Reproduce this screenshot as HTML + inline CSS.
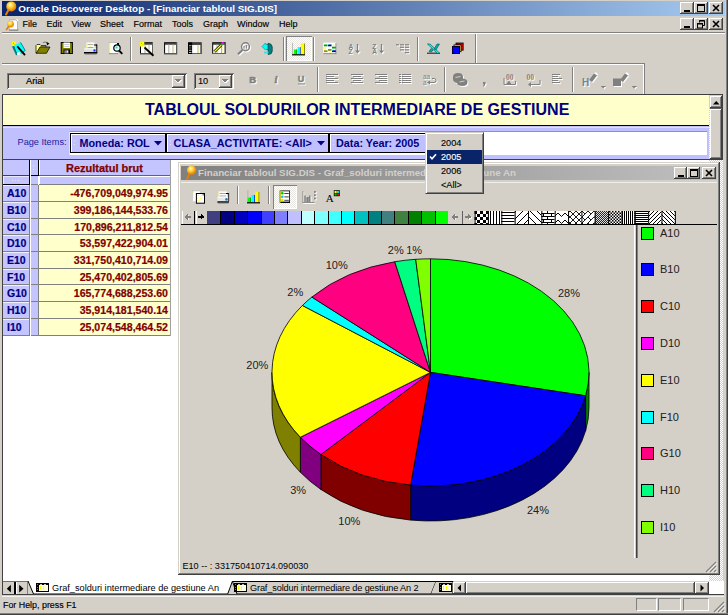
<!DOCTYPE html><html><head><meta charset="utf-8"><style>
html,body{margin:0;padding:0;width:728px;height:615px;overflow:hidden;background:#D4D0C8;}
body{position:relative;font-family:"Liberation Sans",sans-serif;}
div{box-sizing:border-box;}
svg{position:absolute;overflow:visible}
</style></head><body>
<div style="position:absolute;left:0px;top:0px;width:728px;height:615px;background:#D4D0C8"></div>
<div style="position:absolute;left:0px;top:0px;width:1px;height:615px;background:#D4D0C8"></div>
<div style="position:absolute;left:726px;top:0px;width:1px;height:615px;background:#808080"></div>
<div style="position:absolute;left:727px;top:0px;width:1px;height:615px;background:#404040"></div>
<div style="position:absolute;left:0px;top:613px;width:728px;height:1px;background:#808080"></div>
<div style="position:absolute;left:0px;top:614px;width:728px;height:1px;background:#404040"></div>
<div style="position:absolute;left:1.6px;top:1px;width:723.4px;height:14.8px;background:linear-gradient(to right,#0A246A,#A6CAF0)"></div>
<div style="position:absolute;left:18.3px;top:2px;white-space:pre;color:#fff;font-weight:bold;font-size:9.85px;line-height:14px;font-family:"Liberation Sans",sans-serif;">Oracle Discoverer Desktop - [Financiar tabloul SIG.DIS]</div>
<div style="position:absolute;left:680px;top:2px;width:14px;height:12px;background:#D4D0C8;box-shadow:inset -1px -1px #404040, inset 1px 1px #FFFFFF, inset -2px -2px #808080, inset 2px 2px #D4D0C8;"></div>
<div style="position:absolute;left:684px;top:10px;width:6px;height:2px;background:#000"></div>
<div style="position:absolute;left:694px;top:2px;width:14px;height:12px;background:#D4D0C8;box-shadow:inset -1px -1px #404040, inset 1px 1px #FFFFFF, inset -2px -2px #808080, inset 2px 2px #D4D0C8;"></div>
<div style="position:absolute;left:697px;top:4px;width:8px;height:8px;border:1px solid #000;border-top-width:2px"></div>
<div style="position:absolute;left:709px;top:2px;width:14px;height:12px;background:#D4D0C8;box-shadow:inset -1px -1px #404040, inset 1px 1px #FFFFFF, inset -2px -2px #808080, inset 2px 2px #D4D0C8;"></div>
<svg style="left:709px;top:2px" width="14" height="12"><path d="M4 3 L10 9 M10 3 L4 9" stroke="#000" stroke-width="1.6"/></svg>
<div style="position:absolute;left:22.5px;top:18px;white-space:pre;color:#000;font-size:9px;line-height:12px;-webkit-text-stroke:0.15px #000;font-family:"Liberation Sans",sans-serif;">File</div>
<div style="position:absolute;left:46.5px;top:18px;white-space:pre;color:#000;font-size:9px;line-height:12px;-webkit-text-stroke:0.15px #000;font-family:"Liberation Sans",sans-serif;">Edit</div>
<div style="position:absolute;left:71.5px;top:18px;white-space:pre;color:#000;font-size:9px;line-height:12px;-webkit-text-stroke:0.15px #000;font-family:"Liberation Sans",sans-serif;">View</div>
<div style="position:absolute;left:100px;top:18px;white-space:pre;color:#000;font-size:9px;line-height:12px;-webkit-text-stroke:0.15px #000;font-family:"Liberation Sans",sans-serif;">Sheet</div>
<div style="position:absolute;left:133.5px;top:18px;white-space:pre;color:#000;font-size:9px;line-height:12px;-webkit-text-stroke:0.15px #000;font-family:"Liberation Sans",sans-serif;">Format</div>
<div style="position:absolute;left:172px;top:18px;white-space:pre;color:#000;font-size:9px;line-height:12px;-webkit-text-stroke:0.15px #000;font-family:"Liberation Sans",sans-serif;">Tools</div>
<div style="position:absolute;left:203px;top:18px;white-space:pre;color:#000;font-size:9px;line-height:12px;-webkit-text-stroke:0.15px #000;font-family:"Liberation Sans",sans-serif;">Graph</div>
<div style="position:absolute;left:237px;top:18px;white-space:pre;color:#000;font-size:9px;line-height:12px;-webkit-text-stroke:0.15px #000;font-family:"Liberation Sans",sans-serif;">Window</div>
<div style="position:absolute;left:279px;top:18px;white-space:pre;color:#000;font-size:9px;line-height:12px;-webkit-text-stroke:0.15px #000;font-family:"Liberation Sans",sans-serif;">Help</div>
<div style="position:absolute;left:680px;top:18px;width:14px;height:12px;background:#D4D0C8;box-shadow:inset -1px -1px #404040, inset 1px 1px #FFFFFF, inset -2px -2px #808080, inset 2px 2px #D4D0C8;"></div>
<div style="position:absolute;left:684px;top:26px;width:6px;height:2px;background:#000"></div>
<div style="position:absolute;left:694px;top:18px;width:14px;height:12px;background:#D4D0C8;box-shadow:inset -1px -1px #404040, inset 1px 1px #FFFFFF, inset -2px -2px #808080, inset 2px 2px #D4D0C8;"></div>
<svg style="left:694px;top:18px" width="14" height="12"><path d="M5.5 2.5h5v5h-2 M5.5 2.5v2" stroke="#000" fill="none" stroke-width="1"/><path d="M5.5 3h5" stroke="#000" stroke-width="1"/><rect x="3.5" y="5.5" width="5" height="4.5" stroke="#000" fill="none" stroke-width="1"/><path d="M3.5 6h5" stroke="#000"/></svg>
<div style="position:absolute;left:709px;top:18px;width:14px;height:12px;background:#D4D0C8;box-shadow:inset -1px -1px #404040, inset 1px 1px #FFFFFF, inset -2px -2px #808080, inset 2px 2px #D4D0C8;"></div>
<svg style="left:709px;top:18px" width="14" height="12"><path d="M4 3 L10 9 M10 3 L4 9" stroke="#000" stroke-width="1.6"/></svg>
<div style="position:absolute;left:2px;top:32px;width:723px;height:1px;background:#808080"></div>
<div style="position:absolute;left:2px;top:33px;width:723px;height:1px;background:#fff"></div>
<div style="position:absolute;left:2px;top:63px;width:643px;height:1px;background:#808080"></div>
<div style="position:absolute;left:2px;top:64px;width:643px;height:1px;background:#fff"></div>
<div style="position:absolute;left:475px;top:34px;width:1px;height:29px;background:#808080"></div>
<div style="position:absolute;left:476px;top:34px;width:1px;height:29px;background:#fff"></div>
<div style="position:absolute;left:2px;top:93px;width:0px;height:1px;background:#808080"></div>
<div style="position:absolute;left:2px;top:94px;width:0px;height:1px;background:#fff"></div>
<div style="position:absolute;left:7px;top:73px;width:180px;height:16px;background:#D4D0C8;box-shadow:inset 1px 1px #808080, inset -1px -1px #FFFFFF, inset 2px 2px #404040, inset -2px -2px #D4D0C8;"></div>
<div style="position:absolute;left:26px;top:75px;white-space:pre;font-size:9.2px;line-height:12px;color:#000;-webkit-text-stroke:0.2px #000;font-family:"Liberation Sans",sans-serif;">Arial</div>
<div style="position:absolute;left:172px;top:75px;width:13px;height:13px;background:#D4D0C8;box-shadow:inset -1px -1px #404040, inset 1px 1px #FFFFFF, inset -2px -2px #808080, inset 2px 2px #D4D0C8;"></div>
<svg style="left:172px;top:75px" width="13.00" height="13.00" viewBox="0 0 16 16" shape-rendering="crispEdges"><g transform="translate(1,1)" fill="#fff" stroke="#fff"><path d="M3.5 5.5 L10.5 5.5 L7 9 Z" fill="#fff"/></g><path d="M3.5 5.5 L10.5 5.5 L7 9 Z" fill="#808080"/></svg>
<div style="position:absolute;left:194px;top:73px;width:40px;height:16px;background:#D4D0C8;box-shadow:inset 1px 1px #808080, inset -1px -1px #FFFFFF, inset 2px 2px #404040, inset -2px -2px #D4D0C8;"></div>
<div style="position:absolute;left:198px;top:75px;white-space:pre;font-size:9.2px;line-height:12px;color:#000;-webkit-text-stroke:0.1px #000;font-family:"Liberation Sans",sans-serif;">10</div>
<div style="position:absolute;left:219px;top:75px;width:13px;height:13px;background:#D4D0C8;box-shadow:inset -1px -1px #404040, inset 1px 1px #FFFFFF, inset -2px -2px #808080, inset 2px 2px #D4D0C8;"></div>
<svg style="left:219px;top:75px" width="13.00" height="13.00" viewBox="0 0 16 16" shape-rendering="crispEdges"><g transform="translate(1,1)" fill="#fff" stroke="#fff"><path d="M3.5 5.5 L10.5 5.5 L7 9 Z" fill="#fff"/></g><path d="M3.5 5.5 L10.5 5.5 L7 9 Z" fill="#808080"/></svg>
<div style="position:absolute;left:643px;top:64px;width:1px;height:30px;background:#fff"></div>
<div style="position:absolute;left:644px;top:64px;width:1px;height:30px;background:#808080"></div>
<svg style="left:0;top:0" width="30" height="20"><defs><radialGradient id="mg" cx="0.4" cy="0.35" r="0.6"><stop offset="0" stop-color="#FFFFB0"/><stop offset="0.45" stop-color="#FFD040"/><stop offset="1" stop-color="#E88000"/></radialGradient></defs><circle cx="11.3" cy="6.4" r="5" fill="url(#mg)"/><path d="M8.5 10 L6 14.5" stroke="#E88000" stroke-width="2" stroke-linecap="round"/></svg>
<svg style="left:4px;top:16.5px" width="15.00" height="15.00" viewBox="0 0 16 16"><rect x="5" y="2.5" width="10" height="11" fill="#fff"/><path d="M5.5 3h7l2 2v9h-9z" fill="none" stroke="#909090" stroke-width="0.8"/><rect x="5.5" y="13.5" width="10" height="1" fill="#808080"/><circle cx="7" cy="7.5" r="3.6" fill="url(#mg)"/><path d="M5 10 L2.3 14" fill="none" stroke="#E08000" stroke-width="1.8"/></svg>
<div style="position:absolute;left:130px;top:37px;width:1px;height:24px;background:#808080"></div>
<div style="position:absolute;left:131px;top:37px;width:1px;height:24px;background:#fff"></div>
<div style="position:absolute;left:283px;top:37px;width:1px;height:24px;background:#808080"></div>
<div style="position:absolute;left:284px;top:37px;width:1px;height:24px;background:#fff"></div>
<div style="position:absolute;left:313px;top:37px;width:1px;height:24px;background:#808080"></div>
<div style="position:absolute;left:314px;top:37px;width:1px;height:24px;background:#fff"></div>
<div style="position:absolute;left:417px;top:37px;width:1px;height:24px;background:#808080"></div>
<div style="position:absolute;left:418px;top:37px;width:1px;height:24px;background:#fff"></div>
<div style="position:absolute;left:286px;top:36px;width:26px;height:25px;box-shadow:inset 1px 1px #808080, inset -1px -1px #fff;background-color:#E8E6E2;background-image:linear-gradient(45deg,#fff 25%,transparent 25%,transparent 75%,#fff 75%),linear-gradient(45deg,#fff 25%,transparent 25%,transparent 75%,#fff 75%);background-size:2px 2px;background-position:0 0,1px 1px;"></div>
<div style="position:absolute;left:317px;top:67px;width:1px;height:25px;background:#808080"></div>
<div style="position:absolute;left:318px;top:67px;width:1px;height:25px;background:#fff"></div>
<div style="position:absolute;left:444px;top:67px;width:1px;height:25px;background:#808080"></div>
<div style="position:absolute;left:445px;top:67px;width:1px;height:25px;background:#fff"></div>
<div style="position:absolute;left:572px;top:67px;width:1px;height:25px;background:#808080"></div>
<div style="position:absolute;left:573px;top:67px;width:1px;height:25px;background:#fff"></div>
<svg style="left:601px;top:86px" width="6" height="4"><path d="M0 0h5l-2.5 3z" fill="#808080"/><path d="M1 4h5" stroke="#fff" stroke-width="0"/></svg>
<svg style="left:632px;top:86px" width="6" height="4"><path d="M0 0h5l-2.5 3z" fill="#808080"/><path d="M1 4h5" stroke="#fff" stroke-width="0"/></svg>
<div style="position:absolute;left:2px;top:94px;width:721px;height:487px;background:#fff;border-top:1px solid #404040;border-left:1px solid #404040"></div>
<div style="position:absolute;left:3px;top:95px;width:706px;height:31px;background:#FFFFCC;border-bottom:1px solid #000"></div>
<div style="position:absolute;left:145px;top:102px;white-space:pre;font-weight:bold;font-size:16px;line-height:16px;color:#000080;font-family:"Liberation Sans",sans-serif;">TABLOUL SOLDURILOR INTERMEDIARE DE GESTIUNE</div>
<div style="position:absolute;left:709px;top:108px;width:13.5px;height:473px;background-color:#D4D0C8;background-image:linear-gradient(45deg,#fff 25%,transparent 25%,transparent 75%,#fff 75%),linear-gradient(45deg,#fff 25%,transparent 25%,transparent 75%,#fff 75%);background-size:2px 2px;background-position:0 0,1px 1px;"></div>
<div style="position:absolute;left:709px;top:95px;width:14px;height:13px;background:#D4D0C8"></div>
<div style="position:absolute;left:709.5px;top:96px;width:12.5px;height:11.5px;background:#D4D0C8;box-shadow:inset -1px -1px #404040, inset 1px 1px #FFFFFF, inset -2px -2px #808080, inset 2px 2px #D4D0C8;"></div>
<div style="position:absolute;left:709.5px;top:107.5px;width:12.5px;height:1px;background:#606060"></div>
<svg style="left:709.5px;top:96px" width="12" height="12"><path d="M3 8.5h6.5l-3.25-3.5z" fill="#000"/></svg>
<div style="position:absolute;left:709.5px;top:108.5px;width:12.5px;height:50px;background:#D4D0C8;box-shadow:inset -1px -1px #404040, inset 1px 1px #FFFFFF, inset -2px -2px #808080, inset 2px 2px #D4D0C8;"></div>
<div style="position:absolute;left:722px;top:95px;width:1px;height:64px;background:#404040"></div>
<div style="position:absolute;left:722.5px;top:95px;width:3px;height:486px;background:#D4D0C8"></div>
<div style="position:absolute;left:3px;top:126px;width:706px;height:33px;background:#C0C0FF"></div>
<div style="position:absolute;left:3px;top:127px;width:706px;height:1px;background:#E0E0FF"></div>
<div style="position:absolute;left:17.5px;top:137px;white-space:pre;font-size:9.2px;line-height:11px;color:#2020A0;font-family:"Liberation Sans",sans-serif;">Page Items:</div>
<div style="position:absolute;left:68.5px;top:131.2px;width:638px;height:23.4px;background:#fff;border-top:1px solid #9090C0;border-left:1px solid #E0E0E0"></div>
<div style="position:absolute;left:70px;top:133px;width:96px;height:20px;background:#C0C0FF;border:1px solid #000;box-shadow:inset 1px 1px #fff"></div>
<svg style="left:74px;top:139px" width="3" height="9"><rect x="0" y="1.5" width="1" height="1" fill="#E8E8F0"/><rect x="0" y="5" width="1" height="1" fill="#E8E8F0"/></svg>
<div style="position:absolute;left:79.5px;top:136.5px;white-space:pre;font-weight:bold;font-size:10.8px;line-height:12px;color:#000080;font-family:"Liberation Sans",sans-serif;">Moneda: ROL</div>
<svg style="left:154px;top:141px" width="8" height="5"><path d="M0 0h8l-4 4.5z" fill="#000080"/></svg>
<div style="position:absolute;left:166px;top:133px;width:163px;height:20px;background:#C0C0FF;border:1px solid #000;box-shadow:inset 1px 1px #fff"></div>
<svg style="left:170px;top:139px" width="3" height="9"><rect x="0" y="1.5" width="1" height="1" fill="#E8E8F0"/><rect x="0" y="5" width="1" height="1" fill="#E8E8F0"/></svg>
<div style="position:absolute;left:173.6px;top:136.5px;white-space:pre;font-weight:bold;font-size:10.8px;line-height:12px;color:#000080;font-family:"Liberation Sans",sans-serif;">CLASA_ACTIVITATE: &lt;All&gt;</div>
<svg style="left:317px;top:141px" width="8" height="5"><path d="M0 0h8l-4 4.5z" fill="#000080"/></svg>
<div style="position:absolute;left:329px;top:133px;width:100px;height:20px;background:#C0C0FF;border:1px solid #000;box-shadow:inset 1px 1px #fff"></div>
<svg style="left:333px;top:139px" width="3" height="9"><rect x="0" y="1.5" width="1" height="1" fill="#E8E8F0"/><rect x="0" y="5" width="1" height="1" fill="#E8E8F0"/></svg>
<div style="position:absolute;left:336px;top:136.5px;white-space:pre;font-weight:bold;font-size:10.8px;line-height:12px;color:#000080;font-family:"Liberation Sans",sans-serif;">Data: Year: 2005</div>
<div style="position:absolute;left:3px;top:159px;width:720px;height:1px;background:#404040"></div>
<div style="position:absolute;left:3px;top:160px;width:26px;height:16px;background:#C4C4FF;border-bottom:1px solid #404060"></div>
<div style="position:absolute;left:29px;top:160px;width:1px;height:25px;background:#000"></div>
<div style="position:absolute;left:30px;top:160px;width:1px;height:125px;background:#fff"></div>
<div style="position:absolute;left:31px;top:160px;width:7px;height:16px;background:#C4C4FF;border-bottom:1px solid #000"></div>
<div style="position:absolute;left:38px;top:160px;width:1px;height:16px;background:#000"></div>
<svg style="left:33px;top:165px" width="3" height="8"><rect x="0" y="0.5" width="1" height="1" fill="#E8E8F8"/><rect x="0" y="4" width="1" height="1" fill="#E8E8F8"/></svg>
<div style="position:absolute;left:39px;top:160px;width:131px;height:16px;background:#C4C4FF;box-shadow:inset 1px 0 #fff;border-bottom:1px solid #606080"></div>
<div style="position:absolute;left:39px;top:161.5px;white-space:pre;width:131px;text-align:center;font-weight:bold;font-size:11px;line-height:13px;color:#800000;-webkit-text-stroke:0.25px #800000;font-family:"Liberation Sans",sans-serif;">Rezultatul brut</div>
<div style="position:absolute;left:3px;top:176px;width:26px;height:9px;background:#C4C4FF;box-shadow:inset 1px 1px #E8E8FF;border-bottom:1px solid #000"></div>
<svg style="left:12px;top:179px" width="10" height="3"><rect x="0" y="1" width="1" height="1" fill="#E8E8F8"/><rect x="3" y="1" width="1" height="1" fill="#E8E8F8"/><rect x="6" y="1" width="1" height="1" fill="#E8E8F8"/></svg>
<div style="position:absolute;left:31px;top:176px;width:7px;height:9px;background:#C4C4FF;border-bottom:1px solid #808080"></div>
<div style="position:absolute;left:38px;top:176px;width:1px;height:9px;background:#fff"></div>
<div style="position:absolute;left:39px;top:176px;width:131px;height:9px;background:#C4C4FF;box-shadow:inset 1px 1px #fff;border-bottom:1px solid #808080"></div>
<div style="position:absolute;left:3px;top:185px;width:26px;height:17px;background:#C4C4FF;box-shadow:inset 0 1px #F0F0FF;border-bottom:1px solid #808080"></div>
<div style="position:absolute;left:29px;top:185px;width:1px;height:17px;background:#808080"></div>
<div style="position:absolute;left:31px;top:185px;width:7px;height:17px;background:#C4C4FF;border-bottom:1px solid #808080"></div>
<div style="position:absolute;left:38px;top:185px;width:1px;height:17px;background:#808080"></div>
<div style="position:absolute;left:39px;top:185px;width:131px;height:17px;background:#FFFFCC;border-bottom:1px solid #808080"></div>
<div style="position:absolute;left:7px;top:187px;white-space:pre;font-weight:bold;font-size:10.5px;line-height:13px;color:#000080;-webkit-text-stroke:0.2px #000080;font-family:"Liberation Sans",sans-serif;">A10</div>
<div style="position:absolute;left:39px;top:187px;white-space:pre;width:129px;text-align:right;font-weight:bold;font-size:10.6px;line-height:13px;color:#800000;-webkit-text-stroke:0.2px #800000;font-family:"Liberation Sans",sans-serif;">-476,709,049,974.95</div>
<div style="position:absolute;left:3px;top:202px;width:26px;height:17px;background:#C4C4FF;box-shadow:inset 0 1px #F0F0FF;border-bottom:1px solid #808080"></div>
<div style="position:absolute;left:29px;top:202px;width:1px;height:17px;background:#808080"></div>
<div style="position:absolute;left:31px;top:202px;width:7px;height:17px;background:#C4C4FF;border-bottom:1px solid #808080"></div>
<div style="position:absolute;left:38px;top:202px;width:1px;height:17px;background:#808080"></div>
<div style="position:absolute;left:39px;top:202px;width:131px;height:17px;background:#FFFFCC;border-bottom:1px solid #808080"></div>
<div style="position:absolute;left:7px;top:204px;white-space:pre;font-weight:bold;font-size:10.5px;line-height:13px;color:#000080;-webkit-text-stroke:0.2px #000080;font-family:"Liberation Sans",sans-serif;">B10</div>
<div style="position:absolute;left:39px;top:204px;white-space:pre;width:129px;text-align:right;font-weight:bold;font-size:10.6px;line-height:13px;color:#800000;-webkit-text-stroke:0.2px #800000;font-family:"Liberation Sans",sans-serif;">399,186,144,533.76</div>
<div style="position:absolute;left:3px;top:219px;width:26px;height:16px;background:#C4C4FF;box-shadow:inset 0 1px #F0F0FF;border-bottom:1px solid #808080"></div>
<div style="position:absolute;left:29px;top:219px;width:1px;height:16px;background:#808080"></div>
<div style="position:absolute;left:31px;top:219px;width:7px;height:16px;background:#C4C4FF;border-bottom:1px solid #808080"></div>
<div style="position:absolute;left:38px;top:219px;width:1px;height:16px;background:#808080"></div>
<div style="position:absolute;left:39px;top:219px;width:131px;height:16px;background:#FFFFCC;border-bottom:1px solid #808080"></div>
<div style="position:absolute;left:7px;top:221px;white-space:pre;font-weight:bold;font-size:10.5px;line-height:13px;color:#000080;-webkit-text-stroke:0.2px #000080;font-family:"Liberation Sans",sans-serif;">C10</div>
<div style="position:absolute;left:39px;top:221px;white-space:pre;width:129px;text-align:right;font-weight:bold;font-size:10.6px;line-height:13px;color:#800000;-webkit-text-stroke:0.2px #800000;font-family:"Liberation Sans",sans-serif;">170,896,211,812.54</div>
<div style="position:absolute;left:3px;top:235px;width:26px;height:17px;background:#C4C4FF;box-shadow:inset 0 1px #F0F0FF;border-bottom:1px solid #808080"></div>
<div style="position:absolute;left:29px;top:235px;width:1px;height:17px;background:#808080"></div>
<div style="position:absolute;left:31px;top:235px;width:7px;height:17px;background:#C4C4FF;border-bottom:1px solid #808080"></div>
<div style="position:absolute;left:38px;top:235px;width:1px;height:17px;background:#808080"></div>
<div style="position:absolute;left:39px;top:235px;width:131px;height:17px;background:#FFFFCC;border-bottom:1px solid #808080"></div>
<div style="position:absolute;left:7px;top:237px;white-space:pre;font-weight:bold;font-size:10.5px;line-height:13px;color:#000080;-webkit-text-stroke:0.2px #000080;font-family:"Liberation Sans",sans-serif;">D10</div>
<div style="position:absolute;left:39px;top:237px;white-space:pre;width:129px;text-align:right;font-weight:bold;font-size:10.6px;line-height:13px;color:#800000;-webkit-text-stroke:0.2px #800000;font-family:"Liberation Sans",sans-serif;">53,597,422,904.01</div>
<div style="position:absolute;left:3px;top:252px;width:26px;height:17px;background:#C4C4FF;box-shadow:inset 0 1px #F0F0FF;border-bottom:1px solid #808080"></div>
<div style="position:absolute;left:29px;top:252px;width:1px;height:17px;background:#808080"></div>
<div style="position:absolute;left:31px;top:252px;width:7px;height:17px;background:#C4C4FF;border-bottom:1px solid #808080"></div>
<div style="position:absolute;left:38px;top:252px;width:1px;height:17px;background:#808080"></div>
<div style="position:absolute;left:39px;top:252px;width:131px;height:17px;background:#FFFFCC;border-bottom:1px solid #808080"></div>
<div style="position:absolute;left:7px;top:254px;white-space:pre;font-weight:bold;font-size:10.5px;line-height:13px;color:#000080;-webkit-text-stroke:0.2px #000080;font-family:"Liberation Sans",sans-serif;">E10</div>
<div style="position:absolute;left:39px;top:254px;white-space:pre;width:129px;text-align:right;font-weight:bold;font-size:10.6px;line-height:13px;color:#800000;-webkit-text-stroke:0.2px #800000;font-family:"Liberation Sans",sans-serif;">331,750,410,714.09</div>
<div style="position:absolute;left:3px;top:269px;width:26px;height:16px;background:#C4C4FF;box-shadow:inset 0 1px #F0F0FF;border-bottom:1px solid #808080"></div>
<div style="position:absolute;left:29px;top:269px;width:1px;height:16px;background:#808080"></div>
<div style="position:absolute;left:31px;top:269px;width:7px;height:16px;background:#C4C4FF;border-bottom:1px solid #808080"></div>
<div style="position:absolute;left:38px;top:269px;width:1px;height:16px;background:#808080"></div>
<div style="position:absolute;left:39px;top:269px;width:131px;height:16px;background:#FFFFCC;border-bottom:1px solid #808080"></div>
<div style="position:absolute;left:7px;top:271px;white-space:pre;font-weight:bold;font-size:10.5px;line-height:13px;color:#000080;-webkit-text-stroke:0.2px #000080;font-family:"Liberation Sans",sans-serif;">F10</div>
<div style="position:absolute;left:39px;top:271px;white-space:pre;width:129px;text-align:right;font-weight:bold;font-size:10.6px;line-height:13px;color:#800000;-webkit-text-stroke:0.2px #800000;font-family:"Liberation Sans",sans-serif;">25,470,402,805.69</div>
<div style="position:absolute;left:3px;top:285px;width:26px;height:17px;background:#C4C4FF;box-shadow:inset 0 1px #F0F0FF;border-bottom:1px solid #808080"></div>
<div style="position:absolute;left:29px;top:285px;width:1px;height:17px;background:#808080"></div>
<div style="position:absolute;left:31px;top:285px;width:7px;height:17px;background:#C4C4FF;border-bottom:1px solid #808080"></div>
<div style="position:absolute;left:38px;top:285px;width:1px;height:17px;background:#808080"></div>
<div style="position:absolute;left:39px;top:285px;width:131px;height:17px;background:#FFFFCC;border-bottom:1px solid #808080"></div>
<div style="position:absolute;left:7px;top:287px;white-space:pre;font-weight:bold;font-size:10.5px;line-height:13px;color:#000080;-webkit-text-stroke:0.2px #000080;font-family:"Liberation Sans",sans-serif;">G10</div>
<div style="position:absolute;left:39px;top:287px;white-space:pre;width:129px;text-align:right;font-weight:bold;font-size:10.6px;line-height:13px;color:#800000;-webkit-text-stroke:0.2px #800000;font-family:"Liberation Sans",sans-serif;">165,774,688,253.60</div>
<div style="position:absolute;left:3px;top:302px;width:26px;height:17px;background:#C4C4FF;box-shadow:inset 0 1px #F0F0FF;border-bottom:1px solid #808080"></div>
<div style="position:absolute;left:29px;top:302px;width:1px;height:17px;background:#808080"></div>
<div style="position:absolute;left:31px;top:302px;width:7px;height:17px;background:#C4C4FF;border-bottom:1px solid #808080"></div>
<div style="position:absolute;left:38px;top:302px;width:1px;height:17px;background:#808080"></div>
<div style="position:absolute;left:39px;top:302px;width:131px;height:17px;background:#FFFFCC;border-bottom:1px solid #808080"></div>
<div style="position:absolute;left:7px;top:304px;white-space:pre;font-weight:bold;font-size:10.5px;line-height:13px;color:#000080;-webkit-text-stroke:0.2px #000080;font-family:"Liberation Sans",sans-serif;">H10</div>
<div style="position:absolute;left:39px;top:304px;white-space:pre;width:129px;text-align:right;font-weight:bold;font-size:10.6px;line-height:13px;color:#800000;-webkit-text-stroke:0.2px #800000;font-family:"Liberation Sans",sans-serif;">35,914,181,540.14</div>
<div style="position:absolute;left:3px;top:319px;width:26px;height:17px;background:#C4C4FF;box-shadow:inset 0 1px #F0F0FF;border-bottom:1px solid #808080"></div>
<div style="position:absolute;left:29px;top:319px;width:1px;height:17px;background:#808080"></div>
<div style="position:absolute;left:31px;top:319px;width:7px;height:17px;background:#C4C4FF;border-bottom:1px solid #808080"></div>
<div style="position:absolute;left:38px;top:319px;width:1px;height:17px;background:#808080"></div>
<div style="position:absolute;left:39px;top:319px;width:131px;height:17px;background:#FFFFCC;border-bottom:1px solid #808080"></div>
<div style="position:absolute;left:7px;top:321px;white-space:pre;font-weight:bold;font-size:10.5px;line-height:13px;color:#000080;-webkit-text-stroke:0.2px #000080;font-family:"Liberation Sans",sans-serif;">I10</div>
<div style="position:absolute;left:39px;top:321px;white-space:pre;width:129px;text-align:right;font-weight:bold;font-size:10.6px;line-height:13px;color:#800000;-webkit-text-stroke:0.2px #800000;font-family:"Liberation Sans",sans-serif;">25,074,548,464.52</div>
<div style="position:absolute;left:30px;top:335px;width:1px;height:1px;background:#fff"></div>
<div style="position:absolute;left:170px;top:160px;width:1px;height:176px;background:#A0A0A0"></div>
<div style="position:absolute;left:178px;top:162px;width:542px;height:413px;background:#D4D0C8;box-shadow:inset -1px -1px #404040, inset 1px 1px #D4D0C8, inset -2px -2px #808080, inset 2px 2px #fff"></div>
<div style="position:absolute;left:181px;top:165.6px;width:536px;height:14.6px;background:linear-gradient(to right,#808080,#C0C0C0)"></div>
<div style="position:absolute;left:181px;top:181.5px;width:536px;height:1px;background:#EEEEEA"></div>
<svg style="left:180px;top:163px" width="20" height="20"><circle cx="11.6" cy="7.2" r="4.6" fill="url(#mg)"/><path d="M9.3 11 L7 16.3" stroke="#E88000" stroke-width="1.8" stroke-linecap="round"/></svg>
<div style="position:absolute;left:198px;top:166px;white-space:pre;color:#D4D0C8;font-weight:bold;font-size:9.8px;line-height:14px;font-family:"Liberation Sans",sans-serif;">Financiar tabloul SIG.DIS - Graf_solduri intermediare de gestiune An</div>
<div style="position:absolute;left:673.5px;top:167px;width:13px;height:11.5px;background:#D4D0C8;box-shadow:inset -1px -1px #404040, inset 1px 1px #FFFFFF, inset -2px -2px #808080, inset 2px 2px #D4D0C8;"></div>
<div style="position:absolute;left:677.5px;top:174.5px;width:6px;height:2px;background:#000"></div>
<div style="position:absolute;left:686.5px;top:167px;width:13px;height:11.5px;background:#D4D0C8;box-shadow:inset -1px -1px #404040, inset 1px 1px #FFFFFF, inset -2px -2px #808080, inset 2px 2px #D4D0C8;"></div>
<div style="position:absolute;left:689.5px;top:169px;width:8px;height:8px;border:1px solid #000;border-top-width:2px"></div>
<div style="position:absolute;left:702px;top:167px;width:13.5px;height:11.5px;background:#D4D0C8;box-shadow:inset -1px -1px #404040, inset 1px 1px #FFFFFF, inset -2px -2px #808080, inset 2px 2px #D4D0C8;"></div>
<svg style="left:702px;top:167px" width="13.5" height="11.5"><path d="M4 3 L10 9 M10 3 L4 9" stroke="#000" stroke-width="1.6"/></svg>
<div style="position:absolute;left:237px;top:186px;width:1px;height:18px;background:#808080"></div>
<div style="position:absolute;left:238px;top:186px;width:1px;height:18px;background:#fff"></div>
<div style="position:absolute;left:268px;top:186px;width:1px;height:18px;background:#808080"></div>
<div style="position:absolute;left:269px;top:186px;width:1px;height:18px;background:#fff"></div>
<div style="position:absolute;left:272.5px;top:185px;width:24px;height:24px;box-shadow:inset 1px 1px #808080, inset -1px -1px #fff;background-color:#E8E6E2;background-image:linear-gradient(45deg,#fff 25%,transparent 25%,transparent 75%,#fff 75%),linear-gradient(45deg,#fff 25%,transparent 25%,transparent 75%,#fff 75%);background-size:2px 2px;background-position:0 0,1px 1px;"></div>
<div style="position:absolute;left:207.0px;top:211px;width:13.5px;height:13px;background:#404080"></div>
<div style="position:absolute;left:220.39px;top:211px;width:13.5px;height:13px;background:#000080;border-left:1px solid #000"></div>
<div style="position:absolute;left:233.78px;top:211px;width:13.5px;height:13px;background:#0000C0;border-left:1px solid #000"></div>
<div style="position:absolute;left:247.17000000000002px;top:211px;width:13.5px;height:13px;background:#0000FF;border-left:1px solid #000"></div>
<div style="position:absolute;left:260.56px;top:211px;width:13.5px;height:13px;background:#4040FF;border-left:1px solid #000"></div>
<div style="position:absolute;left:273.95px;top:211px;width:13.5px;height:13px;background:#8080FF;border-left:1px solid #000"></div>
<div style="position:absolute;left:287.34000000000003px;top:211px;width:13.5px;height:13px;background:#C0C0FF;border-left:1px solid #000"></div>
<div style="position:absolute;left:300.73px;top:211px;width:13.5px;height:13px;background:#C0FFFF;border-left:1px solid #000"></div>
<div style="position:absolute;left:314.12px;top:211px;width:13.5px;height:13px;background:#80FFFF;border-left:1px solid #000"></div>
<div style="position:absolute;left:327.51px;top:211px;width:13.5px;height:13px;background:#40FFFF;border-left:1px solid #000"></div>
<div style="position:absolute;left:340.9px;top:211px;width:13.5px;height:13px;background:#00FFFF;border-left:1px solid #000"></div>
<div style="position:absolute;left:354.29px;top:211px;width:13.5px;height:13px;background:#00C0C0;border-left:1px solid #000"></div>
<div style="position:absolute;left:367.68px;top:211px;width:13.5px;height:13px;background:#008080;border-left:1px solid #000"></div>
<div style="position:absolute;left:381.07px;top:211px;width:13.5px;height:13px;background:#408080;border-left:1px solid #000"></div>
<div style="position:absolute;left:394.46000000000004px;top:211px;width:13.5px;height:13px;background:#408040;border-left:1px solid #000"></div>
<div style="position:absolute;left:407.85px;top:211px;width:13.5px;height:13px;background:#008000;border-left:1px solid #000"></div>
<div style="position:absolute;left:421.24px;top:211px;width:13.5px;height:13px;background:#00C000;border-left:1px solid #000"></div>
<div style="position:absolute;left:434.63px;top:211px;width:13.5px;height:13px;background:#00FF00;border-left:1px solid #000"></div>
<div style="position:absolute;left:181.5px;top:211px;width:1px;height:13px;background:#fff"></div>
<div style="position:absolute;left:194.2px;top:211px;width:1.3px;height:13px;background:#000"></div>
<div style="position:absolute;left:195.5px;top:211px;width:1px;height:13px;background:#fff"></div>
<svg style="left:182.5px;top:211.5px" width="12.00" height="12.00" viewBox="0 0 16 16" shape-rendering="crispEdges"><g transform="translate(1,1)" fill="#fff" stroke="#fff"><path d="M3 6.5h7" fill="none" stroke="#fff" stroke-width="2"/><path d="M2 6.5 L6 3 L6 10 Z" fill="#fff"/></g><path d="M3 6.5h7" fill="none" stroke="#808080" stroke-width="2"/><path d="M2 6.5 L6 3 L6 10 Z" fill="#808080"/></svg>
<svg style="left:195.5px;top:211.5px" width="12.00" height="12.00" viewBox="0 0 16 16" shape-rendering="crispEdges"><path d="M3 6.5h6" fill="none" stroke="#000" stroke-width="2"/><path d="M11 6.5 L7 3 L7 10 Z" fill="#000"/></svg>
<div style="position:absolute;left:461.5px;top:211px;width:1.3px;height:13px;background:#606060"></div>
<svg style="left:450px;top:211.5px" width="12.00" height="12.00" viewBox="0 0 16 16" shape-rendering="crispEdges"><g transform="translate(1,1)" fill="#fff" stroke="#fff"><path d="M3 6.5h7" fill="none" stroke="#fff" stroke-width="2"/><path d="M2 6.5 L6 3 L6 10 Z" fill="#fff"/></g><path d="M3 6.5h7" fill="none" stroke="#808080" stroke-width="2"/><path d="M2 6.5 L6 3 L6 10 Z" fill="#808080"/></svg>
<svg style="left:463px;top:211.5px" width="12.00" height="12.00" viewBox="0 0 16 16" shape-rendering="crispEdges"><g transform="translate(1,1)" fill="#fff" stroke="#fff"><path d="M3 6.5h6" fill="none" stroke="#fff" stroke-width="2"/><path d="M11 6.5 L7 3 L7 10 Z" fill="#fff"/></g><path d="M3 6.5h6" fill="none" stroke="#808080" stroke-width="2"/><path d="M11 6.5 L7 3 L7 10 Z" fill="#808080"/></svg>
<svg style="left:474px;top:211px" width="202" height="13"><defs><pattern id="pt0" patternUnits="userSpaceOnUse" width="6" height="6"><rect width="6" height="6" fill="#fff"/><rect width="3" height="3" fill="#000"/><rect x="3" y="3" width="3" height="3" fill="#000"/></pattern><pattern id="pt1" patternUnits="userSpaceOnUse" width="3" height="3"><rect width="3" height="3" fill="#fff"/><rect x="1" width="1" height="3" fill="#000"/></pattern><pattern id="pt2" patternUnits="userSpaceOnUse" width="3" height="3"><rect width="3" height="3" fill="#fff"/><rect y="1" width="3" height="1" fill="#000"/></pattern><pattern id="pt3" patternUnits="userSpaceOnUse" width="7" height="7"><rect width="7" height="7" fill="#fff"/><path d="M-1 8 L8 -1" stroke="#000" stroke-width="1"/><path d="M-1 1 L1 -1 M6 8 L8 6" stroke="#000"/></pattern><pattern id="pt4" patternUnits="userSpaceOnUse" width="7" height="7"><rect width="7" height="7" fill="#fff"/><path d="M-1 -1 L8 8" stroke="#000" stroke-width="1"/><path d="M-1 6 L1 8 M6 -1 L8 1" stroke="#000"/></pattern><pattern id="pt5" patternUnits="userSpaceOnUse" width="8" height="6"><rect width="8" height="6" fill="#fff"/><rect y="2" width="8" height="1" fill="#000"/><rect y="5" width="8" height="1" fill="#000"/><rect x="1" y="0" width="1" height="2" fill="#000"/><rect x="5" y="3" width="1" height="2" fill="#000"/></pattern><pattern id="pt6" patternUnits="userSpaceOnUse" width="7" height="7"><rect width="7" height="7" fill="#fff"/><path d="M0 2 L3.5 5.5 L7 2" stroke="#000" fill="none"/></pattern><pattern id="pt7" patternUnits="userSpaceOnUse" width="6" height="6"><rect width="6" height="6" fill="#fff"/><path d="M0 0 L6 6 M6 0 L0 6" stroke="#000" stroke-width="0.9"/></pattern><pattern id="pt8" patternUnits="userSpaceOnUse" width="6" height="6"><rect width="6" height="6" fill="#fff"/><path d="M0 6 L6 0 M0 0 L3 3" stroke="#000" stroke-width="0.9"/></pattern><pattern id="pt9" patternUnits="userSpaceOnUse" width="2" height="2"><rect width="2" height="2" fill="#fff"/><rect width="1" height="1" fill="#000"/><rect x="1" y="1" width="1" height="1" fill="#000"/><rect width="2" height="2" fill="#888" opacity="0.3"/></pattern><pattern id="pt10" patternUnits="userSpaceOnUse" width="3" height="3"><rect width="3" height="3" fill="#fff"/><rect width="1.5" height="1.5" fill="#000"/><rect x="1.5" y="1.5" width="1.5" height="1.5" fill="#000"/></pattern><pattern id="pt11" patternUnits="userSpaceOnUse" width="2" height="2"><rect width="2" height="2" fill="#fff"/><rect width="1" height="2" fill="#000"/></pattern><pattern id="pt12" patternUnits="userSpaceOnUse" width="2" height="2"><rect width="2" height="2" fill="#fff"/><rect width="2" height="1" fill="#000"/></pattern><pattern id="pt13" patternUnits="userSpaceOnUse" width="4" height="4"><rect width="4" height="4" fill="#fff"/><path d="M-1 5 L5 -1 M-1 1 L1 -1 M3 5 L5 3" stroke="#000" stroke-width="1"/></pattern><pattern id="pt14" patternUnits="userSpaceOnUse" width="4" height="4"><rect width="4" height="4" fill="#fff"/><path d="M-1 -1 L5 5 M-1 3 L1 5 M3 -1 L5 1" stroke="#000" stroke-width="1"/></pattern></defs><rect x="0.60" y="0" width="13.35" height="13" fill="url(#pt0)"/><rect x="0.60" y="0" width="1" height="13" fill="#000"/><rect x="13.95" y="0" width="13.35" height="13" fill="url(#pt1)"/><rect x="13.95" y="0" width="1" height="13" fill="#000"/><rect x="27.30" y="0" width="13.35" height="13" fill="url(#pt2)"/><rect x="27.30" y="0" width="1" height="13" fill="#000"/><rect x="40.65" y="0" width="13.35" height="13" fill="url(#pt3)"/><rect x="40.65" y="0" width="1" height="13" fill="#000"/><rect x="54.00" y="0" width="13.35" height="13" fill="url(#pt4)"/><rect x="54.00" y="0" width="1" height="13" fill="#000"/><rect x="67.35" y="0" width="13.35" height="13" fill="url(#pt5)"/><rect x="67.35" y="0" width="1" height="13" fill="#000"/><rect x="80.70" y="0" width="13.35" height="13" fill="url(#pt6)"/><rect x="80.70" y="0" width="1" height="13" fill="#000"/><rect x="94.05" y="0" width="13.35" height="13" fill="url(#pt7)"/><rect x="94.05" y="0" width="1" height="13" fill="#000"/><rect x="107.40" y="0" width="13.35" height="13" fill="url(#pt8)"/><rect x="107.40" y="0" width="1" height="13" fill="#000"/><rect x="120.75" y="0" width="13.35" height="13" fill="url(#pt9)"/><rect x="120.75" y="0" width="1" height="13" fill="#000"/><rect x="134.10" y="0" width="13.35" height="13" fill="url(#pt10)"/><rect x="134.10" y="0" width="1" height="13" fill="#000"/><rect x="147.45" y="0" width="13.35" height="13" fill="url(#pt11)"/><rect x="147.45" y="0" width="1" height="13" fill="#000"/><rect x="160.80" y="0" width="13.35" height="13" fill="url(#pt12)"/><rect x="160.80" y="0" width="1" height="13" fill="#000"/><rect x="174.15" y="0" width="13.35" height="13" fill="url(#pt13)"/><rect x="174.15" y="0" width="1" height="13" fill="#000"/><rect x="187.50" y="0" width="13.35" height="13" fill="url(#pt14)"/><rect x="187.50" y="0" width="1" height="13" fill="#000"/><rect x="200.85" y="0" width="1" height="13" fill="#000"/></svg>
<div style="position:absolute;left:181px;top:224px;width:536px;height:1px;background:#000"></div>
<div style="position:absolute;left:634px;top:225px;width:1px;height:333px;background:#fff"></div>
<div style="position:absolute;left:636px;top:225px;width:1px;height:333px;background:#404040"></div>
<div style="position:absolute;left:637px;top:225px;width:1px;height:333px;background:#808080"></div>
<div style="position:absolute;left:641px;top:226.5px;width:13px;height:13px;background:#00FF00;border:1px solid #000"></div>
<div style="position:absolute;left:660px;top:226.5px;white-space:pre;font-size:11px;line-height:13px;color:#202020;font-family:"Liberation Sans",sans-serif;">A10</div>
<div style="position:absolute;left:641px;top:263.3px;width:13px;height:13px;background:#0000FF;border:1px solid #000"></div>
<div style="position:absolute;left:660px;top:263.3px;white-space:pre;font-size:11px;line-height:13px;color:#202020;font-family:"Liberation Sans",sans-serif;">B10</div>
<div style="position:absolute;left:641px;top:300.1px;width:13px;height:13px;background:#FF0000;border:1px solid #000"></div>
<div style="position:absolute;left:660px;top:300.1px;white-space:pre;font-size:11px;line-height:13px;color:#202020;font-family:"Liberation Sans",sans-serif;">C10</div>
<div style="position:absolute;left:641px;top:336.9px;width:13px;height:13px;background:#FF00FF;border:1px solid #000"></div>
<div style="position:absolute;left:660px;top:336.9px;white-space:pre;font-size:11px;line-height:13px;color:#202020;font-family:"Liberation Sans",sans-serif;">D10</div>
<div style="position:absolute;left:641px;top:373.7px;width:13px;height:13px;background:#FFFF00;border:1px solid #000"></div>
<div style="position:absolute;left:660px;top:373.7px;white-space:pre;font-size:11px;line-height:13px;color:#202020;font-family:"Liberation Sans",sans-serif;">E10</div>
<div style="position:absolute;left:641px;top:410.5px;width:13px;height:13px;background:#00FFFF;border:1px solid #000"></div>
<div style="position:absolute;left:660px;top:410.5px;white-space:pre;font-size:11px;line-height:13px;color:#202020;font-family:"Liberation Sans",sans-serif;">F10</div>
<div style="position:absolute;left:641px;top:447.29999999999995px;width:13px;height:13px;background:#FF0080;border:1px solid #000"></div>
<div style="position:absolute;left:660px;top:447.29999999999995px;white-space:pre;font-size:11px;line-height:13px;color:#202020;font-family:"Liberation Sans",sans-serif;">G10</div>
<div style="position:absolute;left:641px;top:484.09999999999997px;width:13px;height:13px;background:#00FF80;border:1px solid #000"></div>
<div style="position:absolute;left:660px;top:484.09999999999997px;white-space:pre;font-size:11px;line-height:13px;color:#202020;font-family:"Liberation Sans",sans-serif;">H10</div>
<div style="position:absolute;left:641px;top:520.9px;width:13px;height:13px;background:#80FF00;border:1px solid #000"></div>
<div style="position:absolute;left:660px;top:520.9px;white-space:pre;font-size:11px;line-height:13px;color:#202020;font-family:"Liberation Sans",sans-serif;">I10</div>
<div style="position:absolute;left:182.5px;top:560px;white-space:pre;font-size:9.1px;line-height:12px;color:#000;font-family:"Liberation Sans",sans-serif;">E10 -- : 331750410714.090030</div>
<svg style="left:0;top:0" width="728" height="615" viewBox="0 0 728 615"><path d="M589.00,372.40 A158.5,113.6 0 0 1 585.60,395.80 L585.60,430.80 A158.5,113.6 0 0 0 589.00,407.40 Z" fill="#008000" stroke="#000" stroke-width="0.8"/><path d="M585.60,395.80 A158.5,113.6 0 0 1 410.62,485.10 L410.62,520.10 A158.5,113.6 0 0 0 585.60,430.80 Z" fill="#000080" stroke="#000" stroke-width="0.8"/><path d="M410.62,485.10 A158.5,113.6 0 0 1 320.94,454.49 L320.94,489.49 A158.5,113.6 0 0 0 410.62,520.10 Z" fill="#800000" stroke="#000" stroke-width="0.8"/><path d="M320.94,454.49 A158.5,113.6 0 0 1 300.37,437.26 L300.37,472.26 A158.5,113.6 0 0 0 320.94,489.49 Z" fill="#800080" stroke="#000" stroke-width="0.8"/><path d="M300.37,437.26 A158.5,113.6 0 0 1 272.00,372.40 L272.00,407.40 A158.5,113.6 0 0 0 300.37,472.26 Z" fill="#808000" stroke="#000" stroke-width="0.8"/><path d="M430.5,372.4 L430.50,258.80 A158.5,113.6 0 0 1 585.60,395.80 Z" fill="#00FF00" stroke="#000" stroke-width="0.8" stroke-linejoin="round"/><path d="M430.5,372.4 L585.60,395.80 A158.5,113.6 0 0 1 410.62,485.10 Z" fill="#0000FF" stroke="#000" stroke-width="0.8" stroke-linejoin="round"/><path d="M430.5,372.4 L410.62,485.10 A158.5,113.6 0 0 1 320.94,454.49 Z" fill="#FF0000" stroke="#000" stroke-width="0.8" stroke-linejoin="round"/><path d="M430.5,372.4 L320.94,454.49 A158.5,113.6 0 0 1 300.37,437.26 Z" fill="#FF00FF" stroke="#000" stroke-width="0.8" stroke-linejoin="round"/><path d="M430.5,372.4 L300.37,437.26 A158.5,113.6 0 0 1 302.42,305.48 Z" fill="#FFFF00" stroke="#000" stroke-width="0.8" stroke-linejoin="round"/><path d="M430.5,372.4 L302.42,305.48 A158.5,113.6 0 0 1 311.85,297.08 Z" fill="#00FFFF" stroke="#000" stroke-width="0.8" stroke-linejoin="round"/><path d="M430.5,372.4 L311.85,297.08 A158.5,113.6 0 0 1 394.75,261.73 Z" fill="#FF0080" stroke="#000" stroke-width="0.8" stroke-linejoin="round"/><path d="M430.5,372.4 L394.75,261.73 A158.5,113.6 0 0 1 415.70,259.30 Z" fill="#00FF80" stroke="#000" stroke-width="0.8" stroke-linejoin="round"/><path d="M430.5,372.4 L415.70,259.30 A158.5,113.6 0 0 1 430.50,258.80 Z" fill="#80FF00" stroke="#000" stroke-width="0.8" stroke-linejoin="round"/></svg>
<div style="position:absolute;left:558px;top:285.7px;white-space:pre;font-size:11px;line-height:14px;color:#202020;font-family:"Liberation Sans",sans-serif;">28%</div>
<div style="position:absolute;left:527px;top:502.8px;white-space:pre;font-size:11px;line-height:14px;color:#202020;font-family:"Liberation Sans",sans-serif;">24%</div>
<div style="position:absolute;left:338.3px;top:513.5px;white-space:pre;font-size:11px;line-height:14px;color:#202020;font-family:"Liberation Sans",sans-serif;">10%</div>
<div style="position:absolute;left:290.2px;top:483.2px;white-space:pre;font-size:11px;line-height:14px;color:#202020;font-family:"Liberation Sans",sans-serif;">3%</div>
<div style="position:absolute;left:246.3px;top:358.4px;white-space:pre;font-size:11px;line-height:14px;color:#202020;font-family:"Liberation Sans",sans-serif;">20%</div>
<div style="position:absolute;left:287.3px;top:285.2px;white-space:pre;font-size:11px;line-height:14px;color:#202020;font-family:"Liberation Sans",sans-serif;">2%</div>
<div style="position:absolute;left:325.7px;top:258.3px;white-space:pre;font-size:11px;line-height:14px;color:#202020;font-family:"Liberation Sans",sans-serif;">10%</div>
<div style="position:absolute;left:387.8px;top:243.2px;white-space:pre;font-size:11px;line-height:14px;color:#202020;font-family:"Liberation Sans",sans-serif;">2%</div>
<div style="position:absolute;left:406.2px;top:243px;white-space:pre;font-size:11px;line-height:14px;color:#202020;font-family:"Liberation Sans",sans-serif;">1%</div>
<div style="position:absolute;left:2px;top:581px;width:722px;height:14px;background:#D4D0C8"></div>
<div style="position:absolute;left:2px;top:95px;width:1px;height:500px;background:#404040"></div>
<div style="position:absolute;left:3px;top:581.5px;width:24.5px;height:12.8px;background:#D4D0C8"></div>
<div style="position:absolute;left:3px;top:581px;width:24.5px;height:1px;background:#707070"></div>
<div style="position:absolute;left:14.4px;top:581.5px;width:1.5px;height:12.8px;background:#000"></div>
<div style="position:absolute;left:16px;top:582px;width:1px;height:12px;background:#fff"></div>
<div style="position:absolute;left:26.5px;top:582px;width:1px;height:12px;background:#808080"></div>
<svg style="left:0;top:578px" width="30" height="18"><path d="M10.9 6.8 L10.9 14.6 L6.8 10.7 Z" fill="#000"/><path d="M19.2 6.8 L19.2 14.6 L23.5 10.7 Z" fill="#000"/></svg>
<svg style="left:0;top:575px" width="728" height="22"><path d="M232.5,6.5 L436,6.5 L431,19 L237,19 Z" fill="#D4D0C8" stroke="#000" stroke-width="1"/><path d="M28,6 L33.5,19 L227.7,19 L232.5,6" fill="#fff" stroke="#000" stroke-width="1"/><path d="M436,6.5 L453,6.5 L453,19 L431,19" fill="#D4D0C8" stroke="#000" stroke-width="1"/></svg>
<svg style="left:35.5px;top:583px" width="13" height="9" viewBox="0 0 13 9" shape-rendering="crispEdges"><rect x="0" y="0" width="13" height="9" fill="#000"/><rect x="3" y="2" width="9" height="6" fill="#FFFFE0"/><rect x="4" y="3" width="1" height="4" fill="#FFFF00"/><rect x="7" y="3" width="1" height="4" fill="#FFFF00"/><rect x="1" y="1" width="1" height="1" fill="#808080"/><rect x="1" y="4" width="1" height="1" fill="#808080"/><rect x="1" y="6" width="1" height="1" fill="#808080"/><rect x="4" y="1" width="2" height="1" fill="#C0C0C0"/><rect x="8" y="1" width="2" height="1" fill="#C0C0C0"/></svg>
<svg style="left:234px;top:583px" width="13" height="9" viewBox="0 0 13 9" shape-rendering="crispEdges"><rect x="0" y="0" width="13" height="9" fill="#000"/><rect x="3" y="2" width="9" height="6" fill="#FFFFE0"/><rect x="4" y="3" width="1" height="4" fill="#FFFF00"/><rect x="7" y="3" width="1" height="4" fill="#FFFF00"/><rect x="1" y="1" width="1" height="1" fill="#808080"/><rect x="1" y="4" width="1" height="1" fill="#808080"/><rect x="1" y="6" width="1" height="1" fill="#808080"/><rect x="4" y="1" width="2" height="1" fill="#C0C0C0"/><rect x="8" y="1" width="2" height="1" fill="#C0C0C0"/></svg>
<svg style="left:438.5px;top:583px" width="13" height="9" viewBox="0 0 13 9" shape-rendering="crispEdges"><rect x="0" y="0" width="13" height="9" fill="#000"/><rect x="3" y="2" width="9" height="6" fill="#FFFFE0"/><rect x="4" y="3" width="1" height="4" fill="#FFFF00"/><rect x="7" y="3" width="1" height="4" fill="#FFFF00"/><rect x="1" y="1" width="1" height="1" fill="#808080"/><rect x="1" y="4" width="1" height="1" fill="#808080"/><rect x="1" y="6" width="1" height="1" fill="#808080"/><rect x="4" y="1" width="2" height="1" fill="#C0C0C0"/><rect x="8" y="1" width="2" height="1" fill="#C0C0C0"/></svg>
<div style="position:absolute;left:52px;top:582px;white-space:pre;font-size:9.2px;line-height:12px;color:#000;font-family:"Liberation Sans",sans-serif;">Graf_solduri intermediare de gestiune An</div>
<div style="position:absolute;left:250px;top:582px;white-space:pre;font-size:9.2px;line-height:12px;letter-spacing:-0.15px;color:#000;font-family:"Liberation Sans",sans-serif;">Graf_solduri intermediare de gestiune An 2</div>
<div style="position:absolute;left:453px;top:581.5px;width:13px;height:12.5px;background:#D4D0C8;box-shadow:inset -1px -1px #404040, inset 1px 1px #FFFFFF, inset -2px -2px #808080, inset 2px 2px #D4D0C8;"></div>
<svg style="left:453px;top:582px" width="13" height="12"><path d="M8 2.5v7l-3.5-3.5z" fill="#000"/></svg>
<div style="position:absolute;left:466px;top:581.5px;width:229px;height:12.5px;background:#D4D0C8;box-shadow:inset -1px -1px #404040, inset 1px 1px #FFFFFF, inset -2px -2px #808080, inset 2px 2px #D4D0C8;"></div>
<div style="position:absolute;left:695px;top:581.5px;width:14px;height:12.5px;background:#D4D0C8;box-shadow:inset -1px -1px #404040, inset 1px 1px #FFFFFF, inset -2px -2px #808080, inset 2px 2px #D4D0C8;"></div>
<svg style="left:695px;top:582px" width="14" height="12"><path d="M5.5 2.5v7l3.5-3.5z" fill="#000"/></svg>
<div style="position:absolute;left:709px;top:581px;width:15px;height:13px;background:#fff"></div>
<div style="position:absolute;left:2px;top:594px;width:722px;height:1px;background:#404040"></div>
<div style="position:absolute;left:2px;top:595.5px;width:722px;height:1px;background:#F4F2EE"></div>
<svg style="left:705px;top:561px" width="12" height="12"><path d="M11 1 L1 11 M11 5 L5 11 M11 9 L9 11" stroke="#808080" stroke-width="1.2"/><path d="M11.8 2 L2 11.8 M11.8 6 L6 11.8 M11.8 10 L10 11.8" stroke="#fff" stroke-width="0.8"/></svg>
<svg style="left:713px;top:601px" width="12" height="12"><path d="M11 1 L1 11 M11 5 L5 11 M11 9 L9 11" stroke="#808080" stroke-width="1.2"/><path d="M11.8 2 L2 11.8 M11.8 6 L6 11.8 M11.8 10 L10 11.8" stroke="#fff" stroke-width="0.8"/></svg>
<div style="position:absolute;left:3px;top:599px;white-space:pre;font-size:8.9px;line-height:12px;color:#000;-webkit-text-stroke:0.15px #000;font-family:"Liberation Sans",sans-serif;">For Help, press F1</div>
<div style="position:absolute;left:636px;top:598px;width:21px;height:13px;border:1px solid #808080;border-right-color:#fff;border-bottom-color:#fff"></div>
<div style="position:absolute;left:658px;top:598px;width:23px;height:13px;border:1px solid #808080;border-right-color:#fff;border-bottom-color:#fff"></div>
<div style="position:absolute;left:683px;top:598px;width:26px;height:13px;border:1px solid #808080;border-right-color:#fff;border-bottom-color:#fff"></div>
<svg style="left:0;top:0;position:absolute" width="728" height="615" viewBox="0 0 728 615"><path d="M12 46.5 L14.2 45.5 L18 55 L16 55.3 Z" fill="#008080"/><path d="M14.2 45.5 L20.5 42.3 L25.2 50.5 L19 54.5 L18 55 Z" fill="#00FFFF"/><path d="M20.5 42.3 L25.2 50.5 L19 54.5" fill="none" stroke="#008080" stroke-width="0.9" stroke-linecap="butt"/><path d="M16.8 53 L20 51.8 L20.8 54.6 L17.6 55.3 Z" fill="#fff"/><path d="M17.3 46.3 L25 55.2" fill="none" stroke="#000" stroke-width="1.8" stroke-linecap="butt"/><path d="M11.6 42.5 L13 41.3 L14.5 42 L16.2 41.6 L15.8 43.5 L16.2 45.5 L14 45.8 L12 46 L12.3 44 Z" fill="#FFFF00"/><rect x="13" y="42.8" width="1" height="1" fill="#A0A000"/><rect x="14.6" y="44.3" width="1" height="1" fill="#A0A000"/><path d="M36 45.5 L37 44.5 L40 44.5 L41 45.5 L46 45.5 L46 47 L40.5 47 L37 53 L36 53 Z" fill="#FFFF80" stroke="#000" stroke-width="0.7"/><path d="M40 47 L50 47 L46.5 53.3 L36.2 53.3 Z" fill="#808000" stroke="#000" stroke-width="0.7"/><path d="M43 42.8 Q45 41.2 47.5 42.8" fill="none" stroke="#808080" stroke-width="1.1" stroke-linecap="butt"/><path d="M46.5 42 L49.5 43.5 L47 45.5 Z" fill="#000"/><rect x="60.7" y="42" width="12.2" height="12" fill="#000"/><rect x="61.7" y="43" width="10.2" height="10" fill="#808000"/><rect x="63.5" y="42.5" width="6.5" height="5.5" fill="#fff"/><rect x="64.3" y="44.2" width="5" height="0.8" fill="#C0C0C0"/><rect x="64.3" y="46" width="5" height="0.8" fill="#C0C0C0"/><rect x="63.5" y="49.5" width="6.5" height="4.5" fill="#000"/><rect x="64.3" y="50.3" width="4.3" height="3.2" fill="#808080"/><rect x="66.8" y="50.5" width="1" height="2" fill="#fff"/><rect x="86.5" y="42.5" width="8" height="6" fill="#fff"/><rect x="86.5" y="43.2" width="1" height="1" fill="#FFFF00"/><rect x="86.5" y="46.2" width="1" height="1" fill="#FFFF00"/><rect x="89.5" y="43.2" width="1" height="1" fill="#FFFF00"/><rect x="89.5" y="46.2" width="1" height="1" fill="#FFFF00"/><rect x="87.5" y="44.3" width="6" height="0.8" fill="#909090"/><rect x="87.5" y="47" width="6" height="0.8" fill="#909090"/><rect x="84.3" y="48.5" width="13" height="4" fill="#E0E0E0"/><rect x="84.3" y="48.5" width="13" height="0.8" fill="#fff"/><rect x="94" y="44.5" width="3" height="1" fill="#000"/><rect x="96.3" y="44.5" width="1" height="8" fill="#000"/><rect x="93.5" y="49.5" width="2" height="1.5" fill="#0000FF"/><rect x="93.5" y="50.7" width="2" height="1.3" fill="#00C0C0"/><rect x="84" y="52" width="13.3" height="1.6" fill="#000"/><rect x="85" y="53.6" width="11.5" height="0.8" fill="#606060"/><rect x="109" y="42" width="8.5" height="12" fill="#fff"/><rect x="109" y="42" width="1.2" height="12" fill="#FFFF00"/><rect x="109" y="42" width="8.5" height="0.8" fill="#B0B0B0"/><rect x="109" y="53.3" width="9" height="0.8" fill="#707070"/><rect x="117" y="43" width="2" height="2" fill="#000"/><circle cx="117" cy="48" r="3.2" fill="#F0FFFF" stroke="#000" stroke-width="1.2"/><rect x="115.5" y="46.5" width="2" height="2" fill="#00E0E0"/><path d="M119 50.5 L122.3 53.8" fill="none" stroke="#000" stroke-width="1.8" stroke-linecap="butt"/><rect x="140" y="42.2" width="13" height="12" fill="#000"/><rect x="141" y="44.5" width="11" height="8.7" fill="#fff"/><rect x="141" y="42.7" width="11" height="1.6" fill="#404040"/><rect x="144.5" y="44.5" width="1" height="8.7" fill="#B0B0B0"/><rect x="145.5" y="45.2" width="1" height="1" fill="#FFFF00"/><rect x="145.5" y="47.2" width="1" height="1" fill="#FFFF00"/><rect x="145.5" y="49.2" width="1" height="1" fill="#FFFF00"/><rect x="145.5" y="51.2" width="1" height="1" fill="#FFFF00"/><rect x="148.5" y="44.5" width="1" height="8.7" fill="#B0B0B0"/><rect x="149.5" y="45.2" width="1" height="1" fill="#FFFF00"/><rect x="149.5" y="47.2" width="1" height="1" fill="#FFFF00"/><rect x="149.5" y="49.2" width="1" height="1" fill="#FFFF00"/><rect x="149.5" y="51.2" width="1" height="1" fill="#FFFF00"/><rect x="152" y="42.2" width="1" height="12" fill="#606060"/><rect x="140" y="53.2" width="13" height="1" fill="#606060"/><rect x="140" y="42" width="4.3" height="4.5" fill="#FFFF00"/><rect x="141" y="43" width="1" height="1" fill="#C0C000"/><rect x="142.5" y="44.5" width="1" height="1" fill="#C0C000"/><path d="M144.5 47.5 L153.5 55.8" fill="none" stroke="#000" stroke-width="1.9" stroke-linecap="butt"/><rect x="164.1" y="42.2" width="13" height="12" fill="#000"/><rect x="165.1" y="44.5" width="11" height="8.7" fill="#fff"/><rect x="165.1" y="42.7" width="11" height="1.6" fill="#404040"/><rect x="168.3" y="44.5" width="1" height="8.7" fill="#B0B0B0"/><rect x="169.3" y="45.2" width="1" height="1" fill="#FFFF00"/><rect x="169.3" y="47.2" width="1" height="1" fill="#FFFF00"/><rect x="169.3" y="49.2" width="1" height="1" fill="#FFFF00"/><rect x="169.3" y="51.2" width="1" height="1" fill="#FFFF00"/><rect x="172.5" y="44.5" width="1" height="8.7" fill="#B0B0B0"/><rect x="173.5" y="45.2" width="1" height="1" fill="#FFFF00"/><rect x="173.5" y="47.2" width="1" height="1" fill="#FFFF00"/><rect x="173.5" y="49.2" width="1" height="1" fill="#FFFF00"/><rect x="173.5" y="51.2" width="1" height="1" fill="#FFFF00"/><rect x="176.1" y="42.2" width="1" height="12" fill="#606060"/><rect x="164.1" y="53.2" width="13" height="1" fill="#606060"/><rect x="188.1" y="42.4" width="13.5" height="11.6" fill="#000"/><rect x="189.1" y="44.699999999999996" width="11.5" height="8.3" fill="#fff"/><rect x="189.1" y="42.9" width="11.5" height="1.6" fill="#404040"/><rect x="197.5" y="44.699999999999996" width="1" height="8.3" fill="#B0B0B0"/><rect x="198.5" y="45.4" width="1" height="1" fill="#FFFF00"/><rect x="198.5" y="47.4" width="1" height="1" fill="#FFFF00"/><rect x="198.5" y="49.4" width="1" height="1" fill="#FFFF00"/><rect x="198.5" y="51.4" width="1" height="1" fill="#FFFF00"/><rect x="200.6" y="42.4" width="1" height="11.6" fill="#606060"/><rect x="188.1" y="53.0" width="13.5" height="1" fill="#606060"/><rect x="188.1" y="42.4" width="4" height="11.6" fill="#000"/><rect x="189" y="45.3" width="2.5" height="0.9" fill="#D0D0D0"/><rect x="189" y="47.5" width="2.5" height="0.9" fill="#808080"/><rect x="189" y="49.8" width="2.5" height="0.9" fill="#D0D0D0"/><rect x="189" y="52" width="2.5" height="0.9" fill="#D0D0D0"/><rect x="192.5" y="45" width="1" height="1" fill="#FFFF00"/><rect x="192.5" y="47" width="1" height="1" fill="#FFFF00"/><rect x="192.5" y="49" width="1" height="1" fill="#FFFF00"/><rect x="192.5" y="51" width="1" height="1" fill="#FFFF00"/><rect x="212.2" y="42.2" width="13.5" height="11.8" fill="#000"/><rect x="213.2" y="44.5" width="11.5" height="8.5" fill="#fff"/><rect x="213.2" y="42.7" width="11.5" height="1.6" fill="#404040"/><rect x="216.5" y="44.5" width="1" height="8.5" fill="#B0B0B0"/><rect x="217.5" y="45.2" width="1" height="1" fill="#FFFF00"/><rect x="217.5" y="47.2" width="1" height="1" fill="#FFFF00"/><rect x="217.5" y="49.2" width="1" height="1" fill="#FFFF00"/><rect x="217.5" y="51.2" width="1" height="1" fill="#FFFF00"/><rect x="221" y="44.5" width="1" height="8.5" fill="#B0B0B0"/><rect x="222" y="45.2" width="1" height="1" fill="#FFFF00"/><rect x="222" y="47.2" width="1" height="1" fill="#FFFF00"/><rect x="222" y="49.2" width="1" height="1" fill="#FFFF00"/><rect x="222" y="51.2" width="1" height="1" fill="#FFFF00"/><rect x="224.7" y="42.2" width="1" height="11.8" fill="#606060"/><rect x="212.2" y="53.0" width="13.5" height="1" fill="#606060"/><path d="M214.3 51.8 L221.5 44.8" fill="none" stroke="#000" stroke-width="2.6" stroke-linecap="butt"/><path d="M214.3 51.8 L221.5 44.8" fill="none" stroke="#FFFF00" stroke-width="1.3" stroke-linecap="butt"/><circle cx="222.8" cy="43.3" r="1.3" fill="#FF00FF"/><circle cx="221.6" cy="44.6" r="1" fill="#00C000"/><g transform="translate(1,1)"><circle cx="245.5" cy="46.8" r="4" fill="none" stroke="#FFFFFF" stroke-width="1.4"/><path d="M244 46 L244 48.5 M246.5 45 L246.5 48.5" fill="none" stroke="#FFFFFF" stroke-width="0.9" stroke-linecap="butt"/><path d="M242.5 50 L238 54.3" fill="none" stroke="#FFFFFF" stroke-width="2" stroke-linecap="butt"/></g><circle cx="245.5" cy="46.8" r="4" fill="none" stroke="#808080" stroke-width="1.4"/><path d="M244 46 L244 48.5 M246.5 45 L246.5 48.5" fill="none" stroke="#808080" stroke-width="0.9" stroke-linecap="butt"/><path d="M242.5 50 L238 54.3" fill="none" stroke="#808080" stroke-width="2" stroke-linecap="butt"/><path d="M262 46.5 L265.5 43 L266 44.5 L269.5 44.5 L270 49.5 L266 49.5 L265.5 50 Z" fill="#00FFFF" stroke="#006060" stroke-width="0.5"/><path d="M268 43.2 Q272 43.5 272.3 47 L272.3 51 Q272 54.5 268.5 54.5 L268 54.5 L268 50 Z" fill="#008080" stroke="#003030" stroke-width="0.6"/><rect x="264" y="51.5" width="4.5" height="2" fill="#40E0E0"/><rect x="292.2" y="43" width="0.8" height="11.5" fill="#A0A0A0" opacity="0.8"/><rect x="293.8" y="49.5" width="3.2" height="5" fill="#00FF00"/><rect x="296.5" y="49.5" width="0.6" height="5" fill="#008000"/><rect x="297.6" y="47.2" width="2.9" height="7.3" fill="#00FFFF"/><rect x="300" y="47.2" width="0.7" height="7.3" fill="#0000C0"/><rect x="300.8" y="43.3" width="3.5" height="11.2" fill="#FFFF00"/><rect x="304" y="43.6" width="0.9" height="10.9" fill="#808000"/><rect x="292" y="54.2" width="13" height="1.2" fill="#000"/><rect x="323.3" y="42.6" width="13" height="11.4" fill="#fff"/><rect x="335.5" y="43" width="0.9" height="11" fill="#808080"/><rect x="323.3" y="53.2" width="13" height="0.9" fill="#808080"/><rect x="324" y="44.5" width="3.5" height="1.8" fill="#00A000"/><rect x="328" y="44.5" width="3.5" height="1.8" fill="#000090"/><rect x="328" y="44.3" width="0.8" height="0.8" fill="#00FFFF"/><rect x="333" y="44.3" width="1.2" height="1.2" fill="#FFFF00"/><rect x="324.5" y="47" width="1.2" height="2" fill="#FFFF00"/><rect x="332" y="46.7" width="3.8" height="1.8" fill="#00A000"/><rect x="328" y="49" width="3.5" height="1.8" fill="#909000"/><rect x="332.5" y="49" width="1" height="1" fill="#FFFF00"/><rect x="324" y="50.3" width="3.5" height="1.8" fill="#909000"/><rect x="332" y="50.3" width="3.8" height="1.8" fill="#000090"/><rect x="332" y="50.2" width="0.8" height="0.8" fill="#00FFFF"/><rect x="329" y="51.7" width="1.5" height="1" fill="#FFFF00"/><g transform="translate(1,1)"><text x="348.5" y="48.5" font-size="6.5" font-family="Liberation Sans" font-weight="bold" font-style="normal" fill="#FFFFFF">A</text><text x="348.5" y="54" font-size="6.5" font-family="Liberation Sans" font-weight="bold" font-style="normal" fill="#FFFFFF">Z</text><path d="M357.5 44 L357.5 51.5" fill="none" stroke="#FFFFFF" stroke-width="1.3" stroke-linecap="butt"/><path d="M355 50.5 L360 50.5 L357.5 53.5 Z" fill="#FFFFFF"/></g><text x="348.5" y="48.5" font-size="6.5" font-family="Liberation Sans" font-weight="bold" font-style="normal" fill="#808080">A</text><text x="348.5" y="54" font-size="6.5" font-family="Liberation Sans" font-weight="bold" font-style="normal" fill="#808080">Z</text><path d="M357.5 44 L357.5 51.5" fill="none" stroke="#808080" stroke-width="1.3" stroke-linecap="butt"/><path d="M355 50.5 L360 50.5 L357.5 53.5 Z" fill="#808080"/><g transform="translate(1,1)"><text x="372.3" y="48.5" font-size="6.5" font-family="Liberation Sans" font-weight="bold" font-style="normal" fill="#FFFFFF">Z</text><text x="372.3" y="54" font-size="6.5" font-family="Liberation Sans" font-weight="bold" font-style="normal" fill="#FFFFFF">A</text><path d="M381.5 44 L381.5 51.5" fill="none" stroke="#FFFFFF" stroke-width="1.3" stroke-linecap="butt"/><path d="M379 50.5 L384 50.5 L381.5 53.5 Z" fill="#FFFFFF"/></g><text x="372.3" y="48.5" font-size="6.5" font-family="Liberation Sans" font-weight="bold" font-style="normal" fill="#808080">Z</text><text x="372.3" y="54" font-size="6.5" font-family="Liberation Sans" font-weight="bold" font-style="normal" fill="#808080">A</text><path d="M381.5 44 L381.5 51.5" fill="none" stroke="#808080" stroke-width="1.3" stroke-linecap="butt"/><path d="M379 50.5 L384 50.5 L381.5 53.5 Z" fill="#808080"/><g transform="translate(1,1)"><rect x="396" y="44.2" width="3" height="1.2" fill="#FFFFFF"/><rect x="400" y="44.2" width="4" height="1.2" fill="#FFFFFF"/><rect x="405" y="44.2" width="4" height="1.2" fill="#FFFFFF"/><rect x="400" y="46.7" width="4" height="1.2" fill="#FFFFFF"/><rect x="405" y="46.7" width="4" height="1.2" fill="#FFFFFF"/><rect x="400" y="49.3" width="4" height="1.2" fill="#FFFFFF"/><rect x="405" y="49.3" width="4" height="1.2" fill="#FFFFFF"/><rect x="405" y="52" width="4" height="1.2" fill="#FFFFFF"/></g><rect x="396" y="44.2" width="3" height="1.2" fill="#808080"/><rect x="400" y="44.2" width="4" height="1.2" fill="#808080"/><rect x="405" y="44.2" width="4" height="1.2" fill="#808080"/><rect x="400" y="46.7" width="4" height="1.2" fill="#808080"/><rect x="405" y="46.7" width="4" height="1.2" fill="#808080"/><rect x="400" y="49.3" width="4" height="1.2" fill="#808080"/><rect x="405" y="49.3" width="4" height="1.2" fill="#808080"/><rect x="405" y="52" width="4" height="1.2" fill="#808080"/><rect x="427" y="52.5" width="12.5" height="1.5" fill="#505050"/><path d="M427.5 44 L430 44 L440 53.5 L437.5 53.5 Z" fill="#00FFFF" stroke="#004040" stroke-width="0.6"/><path d="M434 49 L437 44 L439.5 44 L436 50 Z" fill="#00B0B0" stroke="#004040" stroke-width="0.5"/><path d="M429 51.5 L431 48.5 L433 50 L431.5 52 Z" fill="#00B0B0" stroke="#004040" stroke-width="0.5"/><rect x="455.6" y="42.6" width="8" height="8" fill="#000"/><rect x="456.4" y="43.4" width="6.4" height="6.4" fill="#E00000"/><rect x="453.6" y="44.5" width="7.8" height="7.6" fill="#000"/><rect x="454.4" y="45.3" width="6.2" height="6" fill="#FFFF00"/><rect x="452" y="46" width="8" height="8" fill="#000"/><rect x="452.8" y="46.8" width="6.4" height="6.4" fill="#0000FF"/><g transform="translate(1,1)"><g stroke="#FFFFFF" stroke-width="0.6"><text x="249.3" y="83" font-size="9.5" font-family="Liberation Sans" font-weight="bold" font-style="normal" fill="#FFFFFF">B</text></g></g><g stroke="#808080" stroke-width="0.6"><text x="249.3" y="83" font-size="9.5" font-family="Liberation Sans" font-weight="bold" font-style="normal" fill="#808080">B</text></g><g transform="translate(1,1)"><g stroke="#FFFFFF" stroke-width="0.5"><text x="274.5" y="83.2" font-size="10.5" font-family="Liberation Serif" font-weight="bold" font-style="italic" fill="#FFFFFF">i</text></g></g><g stroke="#808080" stroke-width="0.5"><text x="274.5" y="83.2" font-size="10.5" font-family="Liberation Serif" font-weight="bold" font-style="italic" fill="#808080">i</text></g><g transform="translate(1,1)"><g stroke="#FFFFFF" stroke-width="0.4"><text x="297.8" y="82" font-size="9" font-family="Liberation Sans" font-weight="bold" font-style="normal" fill="#FFFFFF">U</text></g><rect x="298" y="83.5" width="7" height="0.9" fill="#FFFFFF"/></g><g stroke="#808080" stroke-width="0.4"><text x="297.8" y="82" font-size="9" font-family="Liberation Sans" font-weight="bold" font-style="normal" fill="#808080">U</text></g><rect x="298" y="83.5" width="7" height="0.9" fill="#808080"/><g transform="translate(1,1)"><rect x="326" y="74" width="12" height="1" fill="#FFFFFF"/><rect x="326" y="76" width="8" height="1" fill="#FFFFFF"/><rect x="326" y="78" width="12" height="1" fill="#FFFFFF"/><rect x="326" y="80" width="8" height="1" fill="#FFFFFF"/><rect x="326" y="82" width="12" height="1" fill="#FFFFFF"/></g><rect x="326" y="74" width="12" height="1" fill="#808080"/><rect x="326" y="76" width="8" height="1" fill="#808080"/><rect x="326" y="78" width="12" height="1" fill="#808080"/><rect x="326" y="80" width="8" height="1" fill="#808080"/><rect x="326" y="82" width="12" height="1" fill="#808080"/><g transform="translate(1,1)"><rect x="351" y="74" width="12" height="1" fill="#FFFFFF"/><rect x="353" y="76" width="8" height="1" fill="#FFFFFF"/><rect x="351" y="78" width="12" height="1" fill="#FFFFFF"/><rect x="353" y="80" width="8" height="1" fill="#FFFFFF"/><rect x="351" y="82" width="12" height="1" fill="#FFFFFF"/></g><rect x="351" y="74" width="12" height="1" fill="#808080"/><rect x="353" y="76" width="8" height="1" fill="#808080"/><rect x="351" y="78" width="12" height="1" fill="#808080"/><rect x="353" y="80" width="8" height="1" fill="#808080"/><rect x="351" y="82" width="12" height="1" fill="#808080"/><g transform="translate(1,1)"><rect x="375" y="74" width="12" height="1" fill="#FFFFFF"/><rect x="379" y="76" width="8" height="1" fill="#FFFFFF"/><rect x="375" y="78" width="12" height="1" fill="#FFFFFF"/><rect x="379" y="80" width="8" height="1" fill="#FFFFFF"/><rect x="375" y="82" width="12" height="1" fill="#FFFFFF"/></g><rect x="375" y="74" width="12" height="1" fill="#808080"/><rect x="379" y="76" width="8" height="1" fill="#808080"/><rect x="375" y="78" width="12" height="1" fill="#808080"/><rect x="379" y="80" width="8" height="1" fill="#808080"/><rect x="375" y="82" width="12" height="1" fill="#808080"/><g transform="translate(1,1)"><rect x="399" y="74" width="2" height="1" fill="#FFFFFF"/><rect x="402" y="74" width="9" height="1" fill="#FFFFFF"/><rect x="399" y="76" width="2" height="1" fill="#FFFFFF"/><rect x="402" y="76" width="9" height="1" fill="#FFFFFF"/><rect x="399" y="78" width="2" height="1" fill="#FFFFFF"/><rect x="402" y="78" width="9" height="1" fill="#FFFFFF"/><rect x="399" y="80" width="2" height="1" fill="#FFFFFF"/><rect x="402" y="80" width="9" height="1" fill="#FFFFFF"/><rect x="399" y="82" width="2" height="1" fill="#FFFFFF"/><rect x="402" y="82" width="9" height="1" fill="#FFFFFF"/></g><rect x="399" y="74" width="2" height="1" fill="#808080"/><rect x="402" y="74" width="9" height="1" fill="#808080"/><rect x="399" y="76" width="2" height="1" fill="#808080"/><rect x="402" y="76" width="9" height="1" fill="#808080"/><rect x="399" y="78" width="2" height="1" fill="#808080"/><rect x="402" y="78" width="9" height="1" fill="#808080"/><rect x="399" y="80" width="2" height="1" fill="#808080"/><rect x="402" y="80" width="9" height="1" fill="#808080"/><rect x="399" y="82" width="2" height="1" fill="#808080"/><rect x="402" y="82" width="9" height="1" fill="#808080"/><g transform="translate(1,1)"><text x="423" y="78.5" font-size="6.5" font-family="Liberation Sans" font-weight="normal" font-style="normal" fill="#FFFFFF">aa</text><text x="423" y="84.5" font-size="6.5" font-family="Liberation Sans" font-weight="normal" font-style="normal" fill="#FFFFFF">a</text><path d="M429 82.5 L434 82.5 Q436 82.5 436 80.5 Q436 78.5 434 78.5 L432 78.5" fill="none" stroke="#FFFFFF" stroke-width="1" stroke-linecap="butt"/><path d="M427 82.5 L430 80.5 L430 84.5 Z" fill="#FFFFFF"/></g><text x="423" y="78.5" font-size="6.5" font-family="Liberation Sans" font-weight="normal" font-style="normal" fill="#808080">aa</text><text x="423" y="84.5" font-size="6.5" font-family="Liberation Sans" font-weight="normal" font-style="normal" fill="#808080">a</text><path d="M429 82.5 L434 82.5 Q436 82.5 436 80.5 Q436 78.5 434 78.5 L432 78.5" fill="none" stroke="#808080" stroke-width="1" stroke-linecap="butt"/><path d="M427 82.5 L430 80.5 L430 84.5 Z" fill="#808080"/><g transform="translate(1,1)"><path d="M453 77 Q453 73 458 73 Q463 73 463 77 L463 78.5 Q467.5 79 467.5 82 Q467.5 86 462.5 86 Q457.5 86 457 83 Q453 82 453 79 Z" fill="#FFFFFF"/><path d="M455.5 77.5 L460.5 76.5 M459.5 82 L464.5 81" fill="none" stroke="#D4D0C8" stroke-width="1" stroke-linecap="butt"/></g><path d="M453 77 Q453 73 458 73 Q463 73 463 77 L463 78.5 Q467.5 79 467.5 82 Q467.5 86 462.5 86 Q457.5 86 457 83 Q453 82 453 79 Z" fill="#808080"/><path d="M455.5 77.5 L460.5 76.5 M459.5 82 L464.5 81" fill="none" stroke="#D4D0C8" stroke-width="1" stroke-linecap="butt"/><g transform="translate(1,1)"><path d="M483 82 L485.5 82 L485.5 84 L484 86.5 L483 86.5 L483.8 84 L483 84 Z" fill="#FFFFFF"/></g><path d="M483 82 L485.5 82 L485.5 84 L484 86.5 L483 86.5 L483.8 84 L483 84 Z" fill="#808080"/><g transform="translate(1,1)"><text x="506" y="79.5" font-size="7.5" font-family="Liberation Serif" font-weight="bold" font-style="normal" fill="#FFFFFF">00</text><path d="M504 78 L504 84.5 L515.5 84.5 L515.5 81" fill="none" stroke="#FFFFFF" stroke-width="1" stroke-linecap="butt"/><path d="M506.5 84 L509 80.5 L511.5 84 Z" fill="#FFFFFF"/></g><text x="506" y="79.5" font-size="7.5" font-family="Liberation Serif" font-weight="bold" font-style="normal" fill="#808080">00</text><path d="M504 78 L504 84.5 L515.5 84.5 L515.5 81" fill="none" stroke="#808080" stroke-width="1" stroke-linecap="butt"/><path d="M506.5 84 L509 80.5 L511.5 84 Z" fill="#808080"/><g transform="translate(1,1)"><text x="526.5" y="79.5" font-size="7.5" font-family="Liberation Serif" font-weight="bold" font-style="normal" fill="#FFFFFF">00</text><path d="M540 80 L540 84.5 L530 84.5" fill="none" stroke="#FFFFFF" stroke-width="1" stroke-linecap="butt"/><path d="M531 82 L528 84.5 L531 87 Z" fill="#FFFFFF"/></g><text x="526.5" y="79.5" font-size="7.5" font-family="Liberation Serif" font-weight="bold" font-style="normal" fill="#808080">00</text><path d="M540 80 L540 84.5 L530 84.5" fill="none" stroke="#808080" stroke-width="1" stroke-linecap="butt"/><path d="M531 82 L528 84.5 L531 87 Z" fill="#808080"/><g transform="translate(1,1)"><rect x="552" y="74" width="8" height="1" fill="#FFFFFF"/><rect x="552" y="76" width="6" height="1" fill="#FFFFFF"/><rect x="552" y="78" width="10" height="1" fill="#FFFFFF"/><rect x="552" y="80" width="6" height="1" fill="#FFFFFF"/><rect x="552" y="82" width="8" height="1" fill="#FFFFFF"/></g><rect x="552" y="74" width="8" height="1" fill="#808080"/><rect x="552" y="76" width="6" height="1" fill="#808080"/><rect x="552" y="78" width="10" height="1" fill="#808080"/><rect x="552" y="80" width="6" height="1" fill="#808080"/><rect x="552" y="82" width="8" height="1" fill="#808080"/><g transform="translate(1,1)"><text x="582" y="85.5" font-size="10" font-family="Liberation Sans" font-weight="bold" font-style="normal" fill="#FFFFFF">H</text><path d="M589 80 L594 73.5 L597 75.5 L592 82 Z" fill="#FFFFFF"/><path d="M594 73.5 L596 72 L597.5 74.5 Z" fill="#fff"/></g><text x="582" y="85.5" font-size="10" font-family="Liberation Sans" font-weight="bold" font-style="normal" fill="#808080">H</text><path d="M589 80 L594 73.5 L597 75.5 L592 82 Z" fill="#808080"/><path d="M594 73.5 L596 72 L597.5 74.5 Z" fill="#fff"/><g transform="translate(1,1)"><rect x="613" y="78.5" width="8" height="7.5" fill="#FFFFFF"/><path d="M620 80 L625 73.5 L628 75.5 L623 82 Z" fill="#FFFFFF"/><path d="M625 73.5 L627 72 L628.5 74.5 Z" fill="#fff"/></g><rect x="613" y="78.5" width="8" height="7.5" fill="#808080"/><path d="M620 80 L625 73.5 L628 75.5 L623 82 Z" fill="#808080"/><path d="M625 73.5 L627 72 L628.5 74.5 Z" fill="#fff"/><g transform="translate(1,1)"><path d="M601 86 L605.5 86 L603.2 88.5 Z" fill="#FFFFFF"/><path d="M632 86 L636.5 86 L634.2 88.5 Z" fill="#FFFFFF"/></g><path d="M601 86 L605.5 86 L603.2 88.5 Z" fill="#808080"/><path d="M632 86 L636.5 86 L634.2 88.5 Z" fill="#808080"/><rect x="191.8" y="190.4" width="8" height="10.8" fill="#fff"/><rect x="191.8" y="190.4" width="8" height="0.8" fill="#B0B0B0"/><rect x="191.8" y="190.4" width="0.8" height="10.8" fill="#B0B0B0"/><rect x="192.8" y="192" width="1" height="1" fill="#FFFF00"/><rect x="192.8" y="194.5" width="1" height="1" fill="#FFFF00"/><rect x="192.8" y="197" width="1" height="1" fill="#FFFF00"/><rect x="195.9" y="193" width="9.1" height="10.7" fill="#000"/><rect x="196.9" y="194" width="7.1" height="8.7" fill="#fff"/><rect x="197.5" y="195" width="1" height="1" fill="#FFFF00"/><rect x="197.5" y="197.5" width="1" height="1" fill="#FFFF00"/><rect x="197.5" y="200" width="1" height="1" fill="#FFFF00"/><rect x="200.5" y="195.5" width="1" height="1" fill="#FFFF00"/><rect x="200.5" y="198" width="1" height="1" fill="#FFFF00"/><rect x="202.5" y="194" width="1.5" height="1.5" fill="#808080"/><rect x="218.5" y="191.4" width="8.5" height="5.5" fill="#fff"/><rect x="218.5" y="192.3" width="1" height="1" fill="#FFFF00"/><rect x="221" y="192.3" width="1" height="1" fill="#FFFF00"/><rect x="218.5" y="194.8" width="1" height="1" fill="#FFFF00"/><rect x="221" y="194.8" width="1" height="1" fill="#FFFF00"/><rect x="219.5" y="193.2" width="6.5" height="0.8" fill="#909090"/><rect x="219.5" y="195.6" width="6.5" height="0.8" fill="#909090"/><rect x="217.4" y="196.8" width="11.6" height="4.6" fill="#E8E8E8"/><rect x="217.4" y="196.8" width="11.6" height="0.8" fill="#fff"/><rect x="226" y="193" width="2.5" height="1" fill="#000"/><rect x="228.3" y="193" width="0.8" height="8" fill="#000"/><rect x="225.5" y="198.3" width="2" height="2" fill="#0050C0"/><rect x="225.5" y="199.3" width="2" height="1" fill="#00A0A0"/><rect x="217.4" y="201.3" width="11.6" height="1.4" fill="#000"/><rect x="218" y="202.6" width="10.5" height="0.8" fill="#606060"/><rect x="247.5" y="190" width="0.8" height="12.5" fill="#A0A0A0" opacity="0.8"/><rect x="247.7" y="197.6" width="3.3" height="4.9" fill="#00FF00"/><rect x="250.4" y="197.6" width="0.6" height="4.9" fill="#008000"/><rect x="251.6" y="195" width="3" height="7.5" fill="#00FFFF"/><rect x="254.2" y="195" width="0.7" height="7.5" fill="#0000C0"/><rect x="255.5" y="191.8" width="3.3" height="10.7" fill="#FFFF00"/><rect x="258.5" y="192" width="0.8" height="10.5" fill="#808000"/><rect x="247" y="202.2" width="13" height="1.2" fill="#000"/><rect x="279.7" y="190.5" width="10.3" height="12.3" fill="#000"/><rect x="280.5" y="191.3" width="8.7" height="10.7" fill="#fff"/><rect x="280.5" y="201.6" width="9.5" height="1.2" fill="#000"/><circle cx="282.3" cy="193.3" r="1.3" fill="#00C000"/><circle cx="282.3" cy="196.8" r="1.3" fill="#00C0FF"/><circle cx="282.3" cy="200.1" r="1.3" fill="#E0E000"/><rect x="284.3" y="193" width="4.5" height="1" fill="#404040"/><rect x="284.3" y="196.4" width="4.5" height="1" fill="#404040"/><rect x="284.3" y="199.8" width="4.5" height="1" fill="#404040"/><rect x="279.7" y="190.5" width="1" height="12" fill="#E0E000"/><g transform="translate(1,1)"><rect x="302.3" y="202" width="12" height="0.9" fill="#FFFFFF"/><rect x="302.5" y="191" width="0.7" height="11" fill="#FFFFFF"/><rect x="304.3" y="195.5" width="1.5" height="6.5" fill="#FFFFFF"/><rect x="306.3" y="197" width="2.5" height="5" fill="#FFFFFF"/><rect x="309" y="195.5" width="1.5" height="6.5" fill="#FFFFFF"/><rect x="314" y="191" width="1.8" height="1.8" fill="#FFFFFF"/><rect x="314" y="194.3" width="1.8" height="1.8" fill="#FFFFFF"/><rect x="314" y="197.6" width="1.8" height="1.8" fill="#FFFFFF"/></g><rect x="302.3" y="202" width="12" height="0.9" fill="#808080"/><rect x="302.5" y="191" width="0.7" height="11" fill="#808080"/><rect x="304.3" y="195.5" width="1.5" height="6.5" fill="#808080"/><rect x="306.3" y="197" width="2.5" height="5" fill="#808080"/><rect x="309" y="195.5" width="1.5" height="6.5" fill="#808080"/><rect x="314" y="191" width="1.8" height="1.8" fill="#808080"/><rect x="314" y="194.3" width="1.8" height="1.8" fill="#808080"/><rect x="314" y="197.6" width="1.8" height="1.8" fill="#808080"/><text x="325.8" y="202.3" font-size="11" font-family="Liberation Serif" font-weight="normal" font-style="normal" fill="#000">A</text><rect x="333.8" y="190.2" width="6" height="6" fill="#000"/><rect x="334.5" y="190.9" width="2.2" height="2.2" fill="#FFFF00"/><rect x="337" y="190.9" width="2.2" height="2.2" fill="#00E0E0"/><rect x="334.5" y="193.4" width="2.2" height="2.2" fill="#00C000"/><rect x="337" y="193.4" width="2.2" height="2.2" fill="#FF0000"/></svg>
<div style="position:absolute;left:425px;top:132px;width:59px;height:62px;background:#D4D0C8;border:1px solid #404040;border-left-color:#D4D0C8;border-top-color:#D4D0C8;box-shadow:inset 1px 1px #fff, inset -1px -1px #808080"></div>
<div style="position:absolute;left:427px;top:150px;width:55px;height:14px;background:#0A246A"></div>
<div style="position:absolute;left:441px;top:137px;white-space:pre;font-size:9.2px;line-height:12px;color:#000;-webkit-text-stroke:0.12px #000;font-family:"Liberation Sans",sans-serif;">2004</div>
<div style="position:absolute;left:441px;top:151px;white-space:pre;font-size:9.2px;line-height:12px;color:#fff;-webkit-text-stroke:0.12px #fff;font-family:"Liberation Sans",sans-serif;">2005</div>
<div style="position:absolute;left:441px;top:165px;white-space:pre;font-size:9.2px;line-height:12px;color:#000;-webkit-text-stroke:0.12px #000;font-family:"Liberation Sans",sans-serif;">2006</div>
<div style="position:absolute;left:441px;top:179px;white-space:pre;font-size:9.2px;line-height:12px;color:#000;-webkit-text-stroke:0.12px #000;font-family:"Liberation Sans",sans-serif;">&lt;All&gt;</div>
<svg style="left:429px;top:153px" width="8" height="8"><path d="M1 3.5l2 2.2 4-4.5" stroke="#fff" stroke-width="1.6" fill="none"/></svg>
</body></html>
